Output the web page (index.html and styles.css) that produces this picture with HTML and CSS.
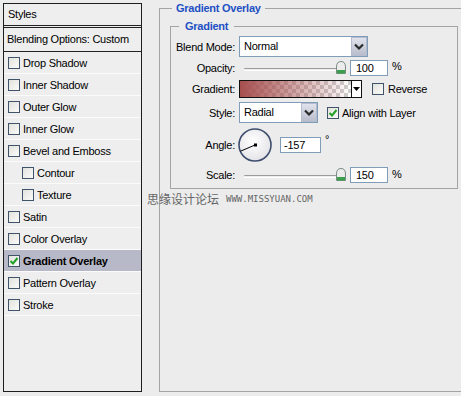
FILE: index.html
```html
<!DOCTYPE html>
<html lang="en">
  <head>
    <title>Layer Style</title>
    <meta charset="UTF-8" />
    <link rel="stylesheet" href="styles.css">
  </head>
  <body>
    <div class="styles">
      <div class="head">Styles</div>
      <div class="blend">Blending Options: Custom</div>
      <div class="item"><span class="box"></span>Drop Shadow</div>
      <div class="item"><span class="box"></span>Inner Shadow</div>
      <div class="item"><span class="box"></span>Outer Glow</div>
      <div class="item"><span class="box"></span>Inner Glow</div>
      <div class="item"><span class="box"></span>Bevel and Emboss</div>
      <div class="item sub"><span class="box"></span>Contour</div>
      <div class="item sub"><span class="box"></span>Texture</div>
      <div class="item"><span class="box"></span>Satin</div>
      <div class="item"><span class="box"></span>Color Overlay</div>
      <div class="item active">
        <span class="box"><svg width="10" height="10" viewBox="0 0 10 10"><path d="M1.5 5 L4 7.5 L8.5 2" fill="none" stroke="#21a02a" stroke-width="2"/></svg></span>Gradient Overlay
      </div>
      <div class="item"><span class="box"></span>Pattern Overlay</div>
      <div class="item"><span class="box"></span>Stroke</div>
    </div>

    <fieldset class="outer">
      <legend>Gradient Overlay</legend>
      <fieldset class="inner">
        <legend>Gradient</legend>

        <div class="row r1">
          <label>Blend Mode:</label>
          <div class="select wide">
            <span>Normal</span>
            <span class="drop"><svg width="12" height="8" viewBox="0 0 12 8"><path d="M2 1.5 L6 5.5 L10 1.5" fill="none" stroke="#2a2a2a" stroke-width="2.2"/></svg></span>
          </div>
        </div>

        <div class="row r2">
          <label>Opacity:</label>
          <div class="slider">
            <span class="track"></span>
            <svg class="thumb" width="10" height="13" viewBox="0 0 10 13"><path d="M0.5 12.5 V6 Q0.5 0.5 5 0.5 Q9.5 0.5 9.5 6 V12.5 Z" fill="#ececec" stroke="#7b8b86"/><rect x="1" y="9" width="8" height="3.5" fill="#3c9f4c"/></svg>
          </div>
          <span class="num">100</span>
          <span class="unit">%</span>
        </div>

        <div class="row r3">
          <label>Gradient:</label>
          <div class="swatch">
            <span class="ramp"></span>
            <span class="arrow"><svg width="7" height="4" viewBox="0 0 7 4"><path d="M0 0 H7 L3.5 4 Z" fill="#000"/></svg></span>
          </div>
          <span class="box rev"></span>
          <span class="txt">Reverse</span>
        </div>

        <div class="row r4">
          <label>Style:</label>
          <div class="select narrow">
            <span>Radial</span>
            <span class="drop"><svg width="12" height="8" viewBox="0 0 12 8"><path d="M2 1.5 L6 5.5 L10 1.5" fill="none" stroke="#2a2a2a" stroke-width="2.2"/></svg></span>
          </div>
          <span class="box align"><svg width="10" height="10" viewBox="0 0 10 10"><path d="M1.5 5 L4 7.5 L8.5 2" fill="none" stroke="#21a02a" stroke-width="2"/></svg></span>
          <span class="txt">Align with Layer</span>
        </div>

        <div class="row r5">
          <label>Angle:</label>
          <svg class="dial" width="34" height="34" viewBox="0 0 34 34">
            <defs>
              <radialGradient id="face" cx="0.45" cy="0.4" r="0.6">
                <stop offset="0" stop-color="#ffffff"/>
                <stop offset="1" stop-color="#e4e4e8"/>
              </radialGradient>
            </defs>
            <circle cx="17" cy="17" r="16" fill="url(#face)" stroke="#3e4d6e" stroke-width="1.6"/>
            <line x1="17" y1="17" x2="2.5" y2="23.2" stroke="#000" stroke-width="1"/>
            <rect x="16" y="15.5" width="3" height="3" fill="#000"/>
          </svg>
          <span class="num deg">-157</span>
          <span class="unit">°</span>
        </div>

        <div class="row r6">
          <label>Scale:</label>
          <div class="slider">
            <span class="track"></span>
            <svg class="thumb" width="10" height="13" viewBox="0 0 10 13"><path d="M0.5 12.5 V6 Q0.5 0.5 5 0.5 Q9.5 0.5 9.5 6 V12.5 Z" fill="#ececec" stroke="#7b8b86"/><rect x="1" y="9" width="8" height="3.5" fill="#3c9f4c"/></svg>
          </div>
          <span class="num">150</span>
          <span class="unit">%</span>
        </div>
      </fieldset>
    </fieldset>

    <div class="mark"><span class="cn">思缘设计论坛</span><span class="url">WWW.MISSYUAN.COM</span></div>
  </body>
</html>
```

FILE: styles.css
```css
body {
  margin: 0;
  width: 461px;
  height: 396px;
  overflow: hidden;
  position: relative;
  display: flex;
  align-items: flex-start;
  background: #ececec;
  font-family: "Liberation Sans", Arial, sans-serif;
  font-size: 11px;
  letter-spacing: -0.25px;
  color: #000;
}

/* left list */
.styles {
  flex-shrink: 0;
  box-sizing: border-box;
  width: 139px;
  height: 389px;
  margin: 3px 0 0 3px;
  border: 1px solid #1e1e1e;
  background: #eeeeee;
}
.head {
  height: 21px;
  line-height: 21px;
  padding-left: 4px;
  border-bottom: 3px double #222;
}
.blend {
  height: 23px;
  line-height: 23px;
  padding-left: 3px;
  border-bottom: 1px solid #222;
}
.item {
  display: flex;
  align-items: center;
  height: 21px;
  padding-left: 4px;
  border-bottom: 1px solid #fbfbfb;
}
.item.sub {
  padding-left: 18px;
}
.item.active {
  background: #b7b9c8;
  font-weight: bold;
}
.box {
  flex-shrink: 0;
  box-sizing: border-box;
  display: inline-flex;
  align-items: center;
  justify-content: center;
  width: 12px;
  height: 12px;
  margin-right: 3px;
  border: 1px solid #40536b;
  background: linear-gradient(135deg, #e2e2dc, #fafafa);
}

/* right side */
fieldset {
  flex-shrink: 0;
  box-sizing: border-box;
  margin: 0;
  min-inline-size: 0;
}
legend {
  line-height: 14px;
  font-weight: bold;
  color: #1e50c4;
}
.outer {
  width: 302px;
  height: 391px;
  margin: 1px 0 0 17px;
  padding: 4px 0 0 10px;
  border: 1px solid #a4a4a4;
  border-right: none;
}
.outer > legend {
  margin-left: 2px;
  padding: 0 4px;
}
.inner {
  width: 288px;
  padding: 3px 0 4px 0;
  border: 1px solid #a4a4a4;
}
.inner > legend {
  margin-left: 8px;
  padding: 0 6px;
}

.row {
  display: flex;
  align-items: center;
}
.row > * {
  flex-shrink: 0;
}
.row label {
  width: 64px;
  margin-right: 4px;
  text-align: right;
}
.r1 { height: 21px; }
.r2 { height: 21px; }
.r3 { height: 21px; }
.r4 { height: 25px; padding-top: 1px; }
.r5 { height: 40px; }
.r6 { height: 19px; }

.select {
  box-sizing: border-box;
  display: flex;
  align-items: stretch;
  height: 21px;
  border: 1px solid #7f9db9;
  background: #fff;
}
.select span:first-child {
  flex: 1;
  padding-left: 4px;
  line-height: 19px;
}
.select.wide { width: 129px; }
.select.narrow { width: 79px; }
.drop {
  box-sizing: border-box;
  display: flex;
  align-items: center;
  justify-content: center;
  width: 16px;
  margin: 0;
  border: 1px solid #b5bccd;
  background: linear-gradient(#e0e3ec, #b9bdcc);
}

.slider {
  position: relative;
  width: 107px;
  height: 15px;
  margin-left: 2px;
}
.track {
  position: absolute;
  left: 3px;
  right: 10px;
  top: 8px;
  height: 1px;
  border-top: 1px solid #9c9c9c;
  border-bottom: 1px solid #fff;
  border-radius: 1px;
}
.thumb {
  position: absolute;
  left: 95px;
  top: 1px;
}
.num {
  box-sizing: border-box;
  width: 38px;
  height: 16px;
  margin-left: 2px;
  padding-left: 5px;
  line-height: 14px;
  border: 1px solid #7f9db9;
  background: #fff;
}
.num.deg {
  width: 41px;
  margin-left: 8px;
  padding-left: 3px;
}
.unit {
  align-self: flex-start;
  margin-left: 4px;
  margin-top: 3px;
}
.r5 .unit { margin-top: 8px; }

.swatch {
  box-sizing: border-box;
  display: flex;
  width: 123px;
  height: 18px;
  border: 1px solid #111;
}
.ramp {
  flex: 1;
  background:
    linear-gradient(to right, rgba(166, 78, 78, 1), rgba(166, 78, 78, 0)),
    conic-gradient(#cfcfcf 25%, #fff 0 50%, #cfcfcf 0 75%, #fff 0) 0 0 / 8px 8px;
}
.arrow {
  display: flex;
  align-items: center;
  justify-content: center;
  width: 9px;
  border-left: 1px solid #111;
  background: #fff;
}
.box.rev {
  margin: 0 4px 0 10px;
}
.box.align {
  margin: 0 3px 0 9px;
}

.dial {
  margin-left: -1px;
}

.mark {
  position: absolute;
  left: 147px;
  top: 190px;
  display: flex;
  align-items: center;
  color: #666;
  letter-spacing: 0;
}
.cn {
  font-family: "Noto Sans CJK SC", sans-serif;
  font-size: 12px;
}
.url {
  margin-left: 7px;
  font-family: "DejaVu Sans Mono", monospace;
  font-size: 9px;
}
```
